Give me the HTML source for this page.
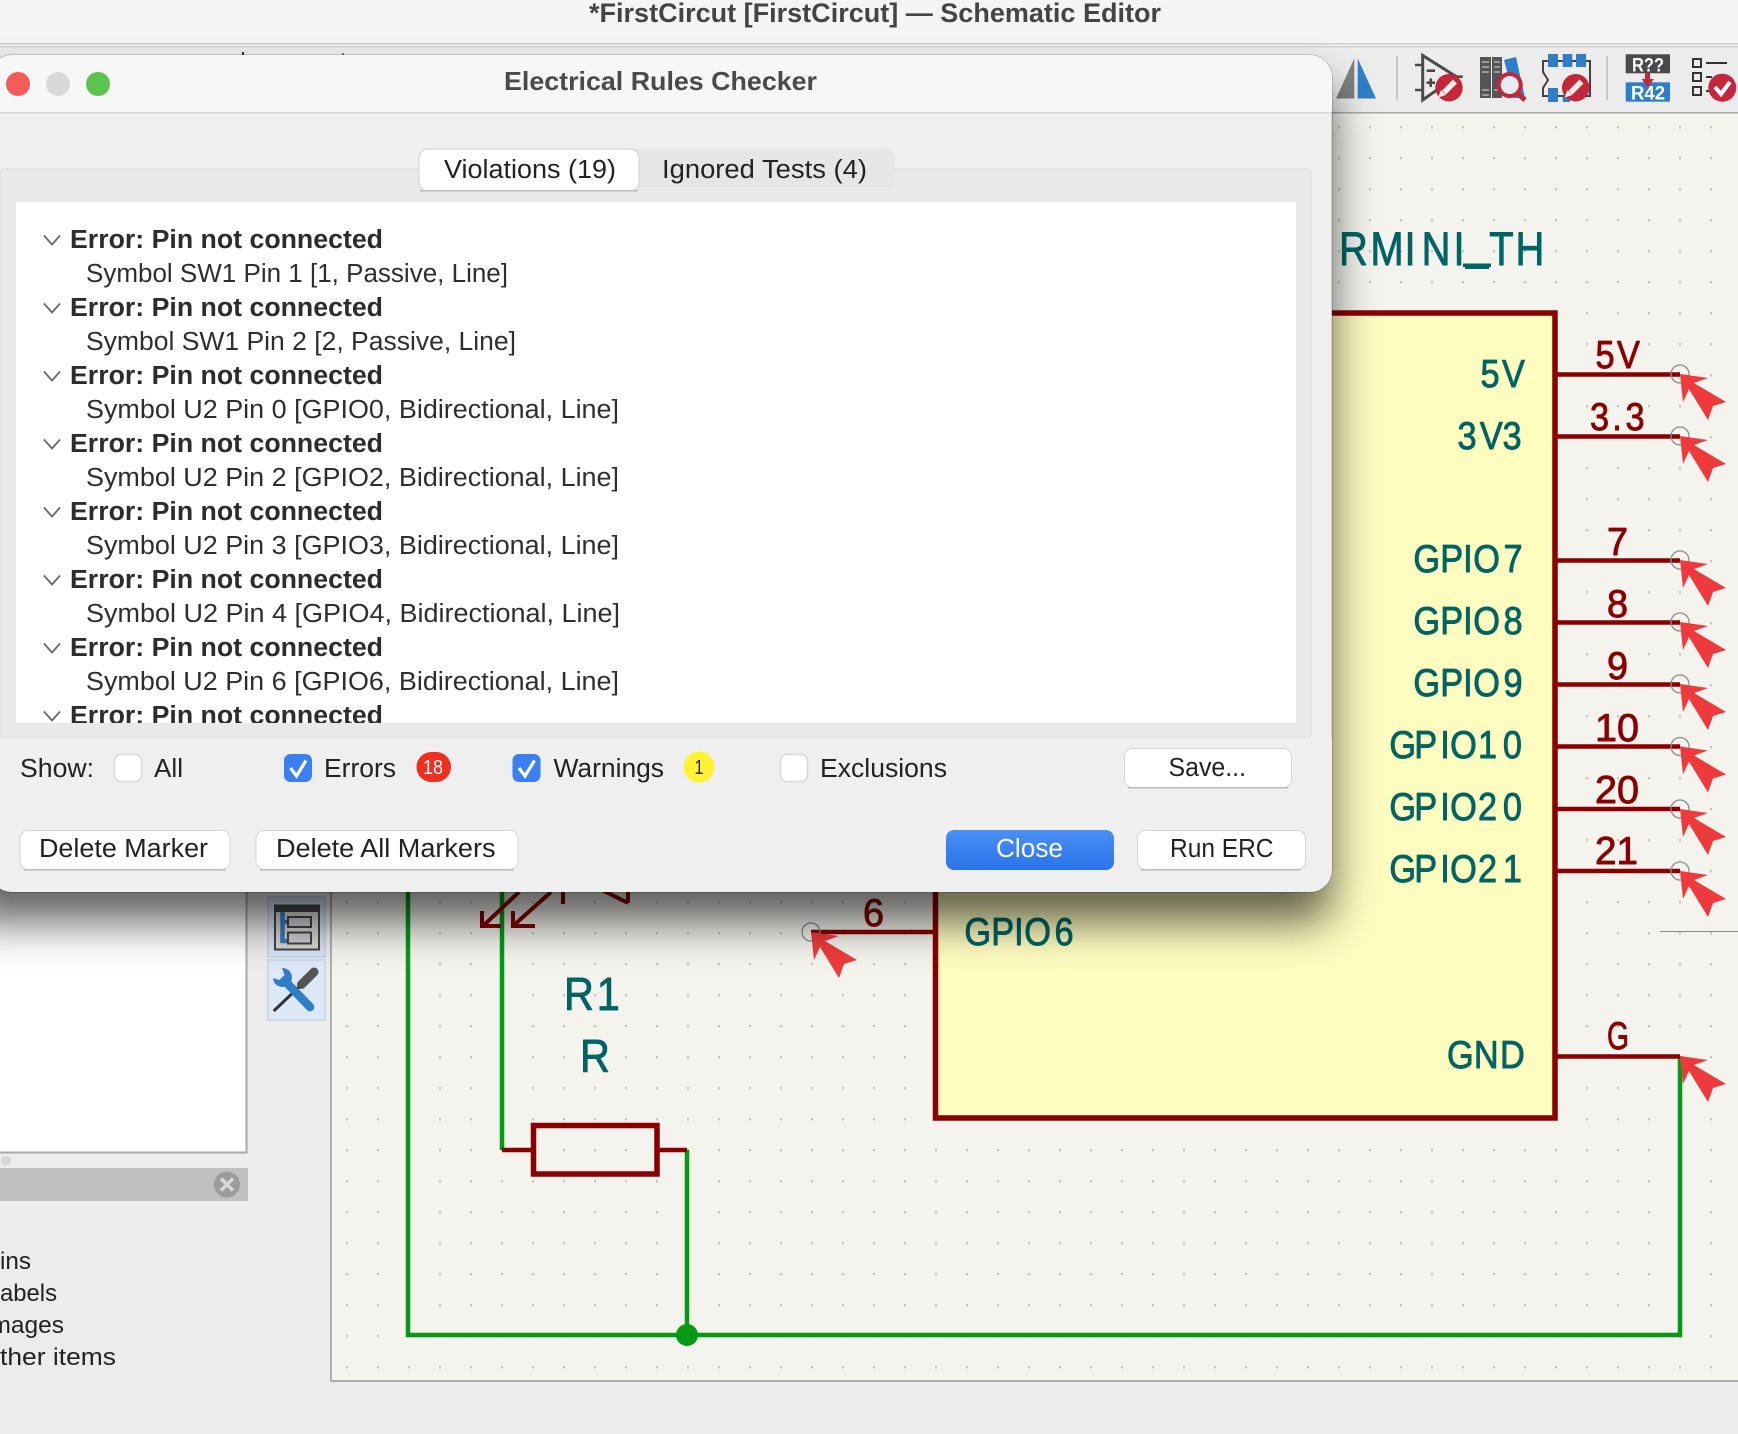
<!DOCTYPE html>
<html><head><meta charset="utf-8"><title>Electrical Rules Checker</title>
<style>
html,body{margin:0;padding:0;background:#ececec;width:1738px;height:1434px;overflow:hidden}
svg{display:block;position:absolute;left:0;top:0}
text{font-family:"Liberation Sans",sans-serif}
.t{fill:#006464;stroke:#006464;stroke-width:.9;stroke-linejoin:round;font-size:39px}
.n{fill:#8a0000;stroke:#8a0000;stroke-width:.9;stroke-linejoin:round;font-size:39px}
.b{font-size:25.5px;fill:#222}
.e{font-size:25.5px;font-weight:bold;fill:#2c2c2c}
.s{font-size:25.5px;fill:#2e2e2e}
.u{font-size:24.5px;fill:#222}
</style></head><body>
<svg width="1738" height="1434" viewBox="0 0 1738 1434" xmlns="http://www.w3.org/2000/svg">
<defs>
<pattern id="grid" x="5" y="2" width="31" height="31" patternUnits="userSpaceOnUse"><rect x="0" y="0" width="2" height="2.4" fill="#c6c5c0"/></pattern>
<polygon id="mk" points="0,0 28,4 14,9 46,28 33,32 28,46 9,15 3,28" fill="#ee3a3c"/>
<filter id="sh" x="-10%" y="-15%" width="120%" height="130%"><feGaussianBlur stdDeviation="22"/></filter>
<linearGradient id="cl" x1="0" y1="0" x2="0" y2="1"><stop offset="0" stop-color="#4a90f6"/><stop offset="1" stop-color="#2b72ea"/></linearGradient>
<clipPath id="lst"><rect x="16" y="202" width="1280" height="521"/></clipPath>
<clipPath id="dlg"><rect x="-10" y="55" width="1342" height="837" rx="22"/></clipPath>
</defs>

<!-- window chrome -->
<rect width="1738" height="43" fill="#f5f5f5"/>
<rect y="43" width="1738" height="1.5" fill="#cfcfcf"/>
<rect y="44.5" width="1738" height="1.5" fill="#f0f0f0"/>
<rect y="46" width="1738" height="1.5" fill="#d2d2d2"/>
<rect y="47.5" width="1738" height="66" fill="#ececec"/>
<text x="589" y="22" font-size="27" font-weight="bold" fill="#444" textLength="572" lengthAdjust="spacingAndGlyphs">*FirstCircut [FirstCircut] — Schematic Editor</text>
<rect x="242" y="52" width="2" height="3" fill="#333"/><rect x="342" y="53" width="2" height="2" fill="#777"/>

<!-- toolbar icons -->
<polygon points="1336,98.5 1354.3,98.5 1354.3,58.5" fill="#808080"/>
<polygon points="1357.7,58.5 1376,98.5 1357.7,98.5" fill="#2f7fc8"/>
<rect x="1396" y="56" width="2" height="44" fill="#c6c6c6"/>
<rect x="1606" y="56" width="2" height="44" fill="#c6c6c6"/>

<path d="M1422.7 55.5V100L1456 76.5Z" fill="none" stroke="#4a4a4a" stroke-width="3"/>
<path d="M1415 65H1422M1415 90H1422M1426.7 70.7H1435M1426.5 82.7H1435M1430.7 78.5V87M1455 76.7H1462.7" stroke="#4a4a4a" stroke-width="2.6" fill="none"/>
<circle cx="1449" cy="87.7" r="13.7" fill="#c4263b"/>
<path d="M1444 92.5L1455 81.5" stroke="#f8efea" stroke-width="5.5" fill="none"/>
<polygon points="1438,97.5 1441,90 1446,95" fill="#f8efea"/>

<rect x="1480" y="57" width="11" height="41" fill="#555"/><rect x="1492" y="57" width="10" height="41" fill="#555"/>
<path d="M1482 62H1489M1482 67H1489M1482 72H1489M1494 62H1500M1494 67H1500M1494 72H1500M1482 90H1489M1494 90H1500M1482 95H1489" stroke="#c4c4c4" stroke-width="1.2"/>
<polygon points="1504,60 1516,57 1525,98 1514,98" fill="#2f7fc8"/>
<circle cx="1509.7" cy="85" r="11" fill="#e6ecf0" stroke="#c4263b" stroke-width="4"/>
<path d="M1517 93L1525 100" stroke="#c4263b" stroke-width="5"/>

<path d="M1543 61H1590V96H1543V88L1548 80L1543 72Z" fill="none" stroke="#4a4040" stroke-width="2"/>
<g fill="#2f7fc8"><rect x="1548" y="54" width="10" height="13"/><rect x="1562.7" y="54" width="9.6" height="13"/><rect x="1576" y="54" width="10" height="13"/><rect x="1548" y="88" width="10" height="14"/><rect x="1562.7" y="97" width="7.3" height="5"/></g>
<circle cx="1575.7" cy="87.7" r="13.7" fill="#c4263b"/>
<path d="M1570.5 92.5L1581.5 81.5" stroke="#f8efea" stroke-width="5.5" fill="none"/>
<polygon points="1564.5,97.5 1567.5,90 1572.5,95" fill="#f8efea"/>

<rect x="1625.7" y="54.3" width="44.3" height="19" fill="#4a4a4a"/>
<text x="1632" y="71.5" font-size="19" font-weight="bold" fill="#fff" textLength="32" lengthAdjust="spacingAndGlyphs">R??</text>
<rect x="1625.7" y="82.3" width="44.3" height="19.4" fill="#2f7fc8"/>
<text x="1631" y="99.5" font-size="19" font-weight="bold" fill="#fff" textLength="34" lengthAdjust="spacingAndGlyphs">R42</text>
<path d="M1645 73H1650V79H1654L1647.5 87L1641.5 79H1645Z" fill="#c4263b"/>

<g fill="none" stroke="#333" stroke-width="2"><rect x="1693" y="59" width="8" height="8"/><rect x="1693" y="73" width="8" height="8"/><rect x="1693" y="87" width="8" height="8"/><path d="M1706 63H1727M1706 77H1712M1706 91H1712"/></g>
<circle cx="1722.3" cy="87.7" r="14" fill="#c4263b"/>
<path d="M1715 87L1721 94L1730 82" stroke="#fff" stroke-width="4" fill="none"/>

<!-- left panel -->
<rect x="0" y="113" width="247" height="1039" fill="#fff"/>
<rect x="245.5" y="113" width="2" height="1040" fill="#a9a9a9"/>
<rect x="0" y="1151.5" width="247.5" height="2" fill="#a9a9a9"/>
<circle cx="6" cy="1161" r="5" fill="#d8d8d8"/>
<rect x="0" y="1168" width="248" height="33" fill="#c0c0c0"/>
<circle cx="227" cy="1184.5" r="13" fill="#9c9c9c"/>
<path d="M221 1178.5L233 1190.5M233 1178.5L221 1190.5" stroke="#d8d8d8" stroke-width="3.5"/>
<text class="u" x="0" y="1269" textLength="31" lengthAdjust="spacingAndGlyphs">ins</text>
<text class="u" x="0" y="1301" textLength="57" lengthAdjust="spacingAndGlyphs">abels</text>
<text class="u" x="-9.5" y="1333" textLength="73.5" lengthAdjust="spacingAndGlyphs">mages</text>
<text class="u" x="0" y="1365" textLength="116" lengthAdjust="spacingAndGlyphs">ther items</text>

<!-- left toolbar buttons -->
<rect x="268" y="897" width="57" height="60" fill="#d6e4f6" stroke="#bfd0e6" stroke-width="1.5"/>
<rect x="268" y="960" width="57" height="60" fill="#dde8f8" stroke="#c4d3e8" stroke-width="1.5"/>
<rect x="275" y="905.5" width="44" height="44" fill="#dad7d0" stroke="#444" stroke-width="2"/>
<rect x="275" y="905" width="44" height="7" fill="#444"/>
<path d="M282.5 912V941H289M282.5 922H289" stroke="#2f7fc8" stroke-width="4.5" fill="none"/>
<rect x="288" y="917" width="23" height="10" fill="#cfcfcf" stroke="#444" stroke-width="2"/>
<rect x="288" y="932.5" width="23" height="11" fill="#cfcfcf" stroke="#444" stroke-width="2"/>
<path d="M314 972L301.5 984.5" stroke="#555" stroke-width="9" stroke-linecap="round"/>
<path d="M299 987L273.7 1011" stroke="#333" stroke-width="3"/>
<path d="M285 981L310 1007" stroke="#2f7fc8" stroke-width="8.5" stroke-linecap="round"/>
<circle cx="282.5" cy="977.5" r="9.5" fill="#2f7fc8"/>
<polygon points="281,965 284.5,975 279.5,980 269,977" fill="#dde8f8"/>

<!-- canvas -->
<rect x="331" y="113" width="1407" height="1267" fill="#f4f3ee"/>
<rect x="331" y="113" width="1407" height="1267" fill="url(#grid)"/>
<rect y="112" x="331" width="1407" height="1.5" fill="#aaa"/>
<rect x="330" y="113" width="2" height="1268" fill="#aeaeae"/>
<rect x="330" y="1380" width="1408" height="2" fill="#aeaeae"/>
<rect x="1660" y="931" width="78" height="1" fill="#8a8a8a"/>

<!-- wires -->
<g fill="none" stroke="#059a14" stroke-width="4.5">
<path d="M408 880V1335H1680V1056"/>
<path d="M502 880V1150"/>
<path d="M687 1150V1335"/>
</g>
<circle cx="687" cy="1335" r="11" fill="#059a14"/>

<!-- symbol -->
<rect x="935.5" y="313" width="619.5" height="805" fill="#fffcc0" stroke="#8a0000" stroke-width="5.5"/>
<g stroke="#8a0000" stroke-width="4.5" fill="none">
<path d="M1555 374.5H1680M1555 436.5H1680M1555 560.5H1680M1555 622.5H1680M1555 684.5H1680M1555 746.5H1680M1555 809H1680M1555 871H1680M1555 1056.5H1680M811 932H935"/>
<path d="M502 1150H532M658 1150H687"/>
</g>
<rect x="533.5" y="1125.5" width="123.5" height="48.5" fill="none" stroke="#8a0000" stroke-width="5.5"/>
<g stroke="#8a0000" stroke-width="4" fill="none">
<path d="M519 892L484 925M482 911V926H501"/>
<path d="M551 892L514 925M513 911V926H535"/>
<path d="M563 885V904M602 890L628 903M628 885V903"/>
</g>
<g fill="none" stroke="#8c8c8c" stroke-width="1.3">
<circle cx="1680" cy="374" r="9"/><circle cx="1680" cy="436" r="9"/><circle cx="1680" cy="560" r="9"/><circle cx="1680" cy="622" r="9"/><circle cx="1680" cy="684" r="9"/><circle cx="1680" cy="746.5" r="9"/><circle cx="1680" cy="809" r="9"/><circle cx="1680" cy="871" r="9"/><circle cx="811" cy="932" r="9"/>
</g>

<!-- labels -->
<text class="t" style="font-size:47px" transform="translate(1343 265) scale(.85 1)" x="-4.7 32.2 72.4 92.5 130 144.7 172 203" y="0 0 0 0 0 -6 0 0">RMINI_TH</text>
<rect x="1463" y="263.5" width="28" height="3.5" fill="#006464"/>
<text class="t" transform="translate(1482 387) scale(.88 1)" x="-1.7 22.7">5V</text>
<text class="t" transform="translate(1457 449) scale(.88 1)" x=".5 26 51.7">3V3</text>
<text class="t" transform="translate(1416 572) scale(.88 1)" x="-3 27.6 53.6 65 99.4">GPIO7</text>
<text class="t" transform="translate(1416 634) scale(.88 1)" x="-3 27.6 53.6 65 99.4">GPIO8</text>
<text class="t" transform="translate(1416 696) scale(.88 1)" x="-3 27.6 53.6 65 99.4">GPIO9</text>
<text class="t" transform="translate(1392 758) scale(.88 1)" x="-3 25.3 54.8 66 97.7 126">GPIO10</text>
<text class="t" transform="translate(1392 820) scale(.88 1)" x="-3 25.3 54.8 66 97.7 126">GPIO20</text>
<text class="t" transform="translate(1392 882) scale(.88 1)" x="-3 25.3 54.8 66 97.7 126">GPIO21</text>
<text class="t" transform="translate(967 945) scale(.88 1)" x="-3 27.6 53.6 65 99.4">GPIO6</text>
<text class="t" transform="translate(1451 1068) scale(.88 1)" x="-4.5 26 55.7">GND</text>
<text class="t" style="font-size:46px" transform="translate(568 1010) scale(.9 1)" x="-4.4 32">R1</text>
<text class="t" style="font-size:46px" transform="translate(584 1072) scale(.9 1)" x="-4.4">R</text>

<text class="n" transform="translate(1597 368) scale(.88 1)" x="-1.7 22.7">5V</text>
<text class="n" transform="translate(1589 430) scale(.88 1)" x="1.1 26.4 41.5">3.3</text>
<text class="n" x="1607" y="555" textLength="21" lengthAdjust="spacingAndGlyphs">7</text>
<text class="n" x="1607" y="617" textLength="21" lengthAdjust="spacingAndGlyphs">8</text>
<text class="n" x="1607" y="679" textLength="21" lengthAdjust="spacingAndGlyphs">9</text>
<text class="n" x="1595" y="741" textLength="44" lengthAdjust="spacingAndGlyphs">10</text>
<text class="n" x="1595" y="803" textLength="44" lengthAdjust="spacingAndGlyphs">20</text>
<text class="n" x="1595" y="864" textLength="43" lengthAdjust="spacingAndGlyphs">21</text>
<text class="n" x="863" y="926" textLength="21" lengthAdjust="spacingAndGlyphs">6</text>
<text class="n" x="1607" y="1049" textLength="22" lengthAdjust="spacingAndGlyphs">G</text>

<!-- markers -->
<use href="#mk" x="1680" y="374"/><use href="#mk" x="1680" y="436"/><use href="#mk" x="1680" y="560"/><use href="#mk" x="1680" y="622"/><use href="#mk" x="1680" y="684"/><use href="#mk" x="1680" y="746.5"/><use href="#mk" x="1680" y="809"/><use href="#mk" x="1680" y="871"/><use href="#mk" x="1680" y="1056"/><use href="#mk" x="811" y="932"/>

<!-- dialog shadow -->
<rect x="-40" y="85" width="1372" height="837" rx="22" fill="#000" fill-opacity=".62" filter="url(#sh)"/>

<!-- dialog -->
<rect x="-10" y="55" width="1342" height="837" rx="22" fill="#efefef" stroke="#000" stroke-opacity=".28" stroke-width="1"/>
<g clip-path="url(#dlg)">
<rect x="-10" y="55" width="1342" height="57" fill="#f7f7f7"/>
<rect x="-10" y="112" width="1342" height="1.5" fill="#d6d6d6"/>
<rect x="0" y="169" width="1311" height="569" rx="5" fill="#e9e9e9" stroke="#e3e3e3" stroke-width="2"/>
<rect x="-10" y="738" width="1342" height="154" fill="#efefef"/>
</g>
<text x="504" y="90" font-size="26" font-weight="bold" fill="#4a4a4a" textLength="313" lengthAdjust="spacingAndGlyphs">Electrical Rules Checker</text>
<circle cx="18" cy="84" r="12" fill="#f65c57"/>
<circle cx="58" cy="84" r="12" fill="#d8d8d8"/>
<circle cx="98" cy="84" r="12" fill="#5cc34f"/>

<!-- tabs -->
<rect x="419" y="149" width="476" height="42" rx="9" fill="#e6e6e6"/>
<rect x="419" y="149" width="220" height="42" rx="9" fill="#fff" stroke="#cfcfcf" stroke-width="1"/>
<rect x="420" y="190" width="218" height="1.5" fill="#bdbdbd"/>
<text class="b" x="444" y="178" textLength="172" lengthAdjust="spacingAndGlyphs">Violations (19)</text>
<text class="b" x="662" y="178" textLength="205" lengthAdjust="spacingAndGlyphs">Ignored Tests (4)</text>

<!-- list -->
<rect x="16" y="202" width="1280" height="521" fill="#fff"/>
<g clip-path="url(#lst)">
<g fill="none" stroke="#6a6a6a" stroke-width="1.8">
<path d="M44 235.5L52 244.5L60 235.5"/><path d="M44 303.5L52 312.5L60 303.5"/><path d="M44 371.5L52 380.5L60 371.5"/><path d="M44 439.5L52 448.5L60 439.5"/><path d="M44 507.5L52 516.5L60 507.5"/><path d="M44 575.5L52 584.5L60 575.5"/><path d="M44 643.5L52 652.5L60 643.5"/><path d="M44 711.5L52 720.5L60 711.5"/>
</g>
<text class="e" x="70" y="248" textLength="313" lengthAdjust="spacingAndGlyphs">Error: Pin not connected</text>
<text class="s" x="86" y="282" textLength="422" lengthAdjust="spacingAndGlyphs">Symbol SW1 Pin 1 [1, Passive, Line]</text>
<text class="e" x="70" y="316" textLength="313" lengthAdjust="spacingAndGlyphs">Error: Pin not connected</text>
<text class="s" x="86" y="350" textLength="430" lengthAdjust="spacingAndGlyphs">Symbol SW1 Pin 2 [2, Passive, Line]</text>
<text class="e" x="70" y="384" textLength="313" lengthAdjust="spacingAndGlyphs">Error: Pin not connected</text>
<text class="s" x="86" y="418" textLength="533" lengthAdjust="spacingAndGlyphs">Symbol U2 Pin 0 [GPIO0, Bidirectional, Line]</text>
<text class="e" x="70" y="452" textLength="313" lengthAdjust="spacingAndGlyphs">Error: Pin not connected</text>
<text class="s" x="86" y="486" textLength="533" lengthAdjust="spacingAndGlyphs">Symbol U2 Pin 2 [GPIO2, Bidirectional, Line]</text>
<text class="e" x="70" y="520" textLength="313" lengthAdjust="spacingAndGlyphs">Error: Pin not connected</text>
<text class="s" x="86" y="554" textLength="533" lengthAdjust="spacingAndGlyphs">Symbol U2 Pin 3 [GPIO3, Bidirectional, Line]</text>
<text class="e" x="70" y="588" textLength="313" lengthAdjust="spacingAndGlyphs">Error: Pin not connected</text>
<text class="s" x="86" y="622" textLength="534" lengthAdjust="spacingAndGlyphs">Symbol U2 Pin 4 [GPIO4, Bidirectional, Line]</text>
<text class="e" x="70" y="656" textLength="313" lengthAdjust="spacingAndGlyphs">Error: Pin not connected</text>
<text class="s" x="86" y="690" textLength="533" lengthAdjust="spacingAndGlyphs">Symbol U2 Pin 6 [GPIO6, Bidirectional, Line]</text>
<text class="e" x="70" y="724" textLength="313" lengthAdjust="spacingAndGlyphs">Error: Pin not connected</text>
</g>

<!-- show row -->
<text class="b" x="20" y="777" textLength="74" lengthAdjust="spacingAndGlyphs">Show:</text>
<rect x="114.5" y="754.5" width="27" height="27" rx="6.5" fill="#fff" stroke="#d8d8d8" stroke-width="1.5"/>
<text class="b" x="154" y="777" textLength="29" lengthAdjust="spacingAndGlyphs">All</text>
<rect x="284" y="754" width="28" height="28" rx="6.5" fill="#3a80f2"/>
<path d="M290.5 768L296.5 776L306 760.5" fill="none" stroke="#fff" stroke-width="3.2"/>
<text class="b" x="324" y="777" textLength="72" lengthAdjust="spacingAndGlyphs">Errors</text>
<rect x="416.5" y="752" width="34.5" height="30" rx="15" fill="#ee2f1f"/>
<text x="423" y="774" font-size="20" fill="#fff" textLength="20" lengthAdjust="spacingAndGlyphs">18</text>
<rect x="512.5" y="754" width="28" height="28" rx="6.5" fill="#3a80f2"/>
<path d="M519 768L525 776L534.5 760.5" fill="none" stroke="#fff" stroke-width="3.2"/>
<text class="b" x="553.5" y="777" textLength="110.5" lengthAdjust="spacingAndGlyphs">Warnings</text>
<circle cx="699" cy="767" r="15.5" fill="#fdf335"/>
<text x="694.5" y="774" font-size="20" fill="#222" textLength="9" lengthAdjust="spacingAndGlyphs">1</text>
<rect x="780.5" y="754.5" width="27" height="27" rx="6.5" fill="#fff" stroke="#d8d8d8" stroke-width="1.5"/>
<text class="b" x="820" y="777" textLength="127" lengthAdjust="spacingAndGlyphs">Exclusions</text>

<!-- buttons -->
<g fill="#fff" stroke="#d5d5d5" stroke-width="1">
<rect x="1124.5" y="748.5" width="167" height="39" rx="8"/>
<rect x="20" y="830.5" width="210" height="39" rx="8"/>
<rect x="256" y="830.5" width="262" height="39" rx="8"/>
<rect x="1137.5" y="830.5" width="168" height="39" rx="8"/>
</g>
<g fill="#bdbdbd">
<rect x="1128" y="787" width="160" height="1.6"/><rect x="24" y="869" width="202" height="1.6"/><rect x="260" y="869" width="254" height="1.6"/><rect x="1141" y="869" width="160" height="1.6"/>
</g>
<rect x="946" y="830" width="168" height="40" rx="8" fill="url(#cl)"/>
<text class="b" x="1168.5" y="776" textLength="77.5" lengthAdjust="spacingAndGlyphs">Save...</text>
<text class="b" x="39" y="857" textLength="169" lengthAdjust="spacingAndGlyphs">Delete Marker</text>
<text class="b" x="276" y="857" textLength="219.5" lengthAdjust="spacingAndGlyphs">Delete All Markers</text>
<text x="996" y="857" font-size="25.5" fill="#fff" textLength="67" lengthAdjust="spacingAndGlyphs">Close</text>
<text class="b" x="1170" y="857" textLength="103.5" lengthAdjust="spacingAndGlyphs">Run ERC</text>
</svg>
</body></html>
